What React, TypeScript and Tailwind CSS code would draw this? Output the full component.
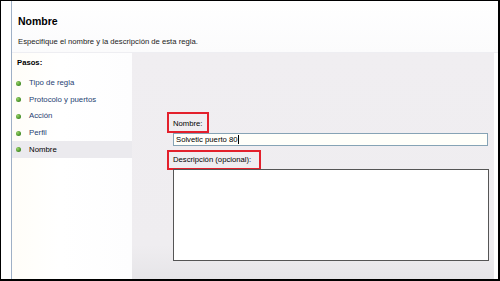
import React from "react";

const steps = [
  { label: "Tipo de regla", active: false },
  { label: "Protocolo y puertos", active: false },
  { label: "Acción", active: false },
  { label: "Perfil", active: false },
  { label: "Nombre", active: true },
];

function Dot() {
  return (
    <span className="w-[5px] h-[5px] rounded-full bg-[radial-gradient(circle_at_35%_35%,#9ad46a,#3f8a22_70%,#2c6a15)] shrink-0" />
  );
}

export default function App() {
  return (
    <div className="w-[500px] h-[281px] border border-black border-r-2 border-b-2 bg-white flex overflow-hidden font-['Liberation_Sans',Arial,sans-serif] text-black">
      <div className="w-[11px] border-r border-[#9fb0c6] bg-white shrink-0" />
      <div className="flex-1 flex flex-col min-w-0">
        <div className="h-[52px] shrink-0 pl-[6px] pt-[14px] bg-[linear-gradient(#ffffff,#fbfbfc)] border-b border-[#eeeef2]">
          <div className="text-[10.5px] font-bold leading-[12px]">Nombre</div>
          <div className="text-[7.7px] leading-[10px] mt-[10px] text-[#222]">
            Especifique el nombre y la descripción de esta regla.
          </div>
        </div>
        <div className="flex-1 flex min-h-0">
          <div className="w-[120px] shrink-0 bg-[linear-gradient(90deg,#fffdf8,#ffffff_40%,#fdfdfe)] flex flex-col pt-[4px]">
            <div className="text-[7.7px] font-bold leading-[10px] pl-[5px] pt-[1px] h-[18px]">Pasos:</div>
            <div className="flex flex-col">
              {steps.map((s) => (
                <div
                  key={s.label}
                  className={`h-[16.6px] flex items-center gap-[8px] pl-[4px] ${s.active ? "bg-[#ebeaee]" : ""}`}
                >
                  <Dot />
                  <span className={`text-[7.8px] leading-[10px] ${s.active ? "text-black" : "text-[#1f3f72]"}`}>
                    {s.label}
                  </span>
                </div>
              ))}
            </div>
          </div>
          <div className="flex-1 mr-[4px] bg-[linear-gradient(#f0eef1,#efedf0_85%,#e6e5e8)] flex flex-col pt-[59px] pl-[35px]">
            <div className="w-[42px] h-[21px] border-2 border-[#e3202c] flex items-end pl-[4px] pb-[2px]">
              <span className="text-[7.7px] leading-[10px]">Nombre:</span>
            </div>
            <div className="ml-[6px] w-[315px] h-[13px] border border-[#86a3b5] bg-[#fffffa] flex items-center pl-[2px]">
              <span className="text-[7.7px] leading-[10px]">Solvetic puerto 80</span>
              <span className="w-px h-[9px] bg-black" />
            </div>
            <div className="mt-[4px] w-[94px] h-[20px] border-2 border-[#e3202c] flex items-end pl-[4px] pb-[3px]">
              <span className="text-[7.7px] leading-[10px]">Descripción (opcional):</span>
            </div>
            <div className="ml-[6px] -mt-[1px] w-[316px] h-[92px] border border-[#555] bg-white" />
          </div>
        </div>
      </div>
    </div>
  );
}
